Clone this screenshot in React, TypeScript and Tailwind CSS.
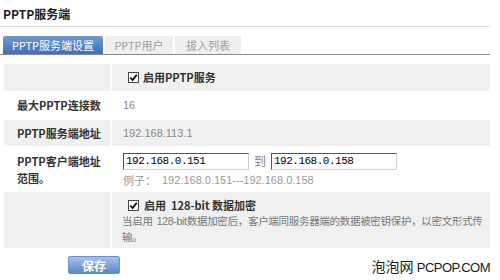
const cjk = "font-['Noto_Sans_CJK_SC','Noto_Sans',sans-serif]";

function Check() {
  return (
    <span className="inline-flex h-[11px] w-[11px] items-center justify-center border border-[#444] bg-white">
      <svg viewBox="0 0 10 10" className="h-[9px] w-[9px]">
        <path d="M1.5 5 L4 7.8 L8.7 1.8" fill="none" stroke="#111" strokeWidth="2" />
      </svg>
    </span>
  );
}

function IpInput({ value }: { value: string }) {
  return (
    <div className="flex h-[17px] w-[126px] items-center border border-t-[#555] border-l-[#555] border-r-[#d0d0d0] border-b-[#d0d0d0] bg-white pl-[2px] font-['Liberation_Mono',monospace] text-[11px] tracking-[-0.5px] text-black">
      {value}
    </div>
  );
}

export default function App() {
  return (
    <div className={`${cjk} relative h-[280px] w-[500px] overflow-hidden bg-white text-[11px] text-[#333]`}>
      {/* title */}
      <div className="mr-[10px] border-b border-[#dcdcdc] pl-[3px] pt-[6px] pb-[4px] text-[12px] font-bold leading-[16px] text-[#222]">
        PPTP服务端
      </div>

      {/* tabs */}
      <div className="mr-[10px] mt-[9px] flex gap-[2px] border-b border-[#8a8a8a] pl-[3px]">
        <div className="flex h-[18px] w-[100px] items-center justify-center rounded-t-[2px] bg-gradient-to-b from-[#6f9ad4] to-[#3f6fb5] text-white">
          PPTP服务端设置
        </div>
        <div className="flex h-[18px] w-[68px] items-center justify-center bg-[#efefef] text-[#a0a0a0]">
          PPTP用户
        </div>
        <div className="flex h-[18px] w-[66px] items-center justify-center bg-[#efefef] text-[#a0a0a0]">
          拔入列表
        </div>
      </div>

      {/* form table */}
      <div className="ml-[4px] mt-[9px] grid w-[486px] grid-cols-[106px_378px] gap-x-[2px] gap-y-[1px]">
        <div className="h-[27px] bg-[#f0f0f0]" />
        <div className="flex h-[27px] items-center gap-[4px] bg-[#f0f0f0] pl-[16px] font-bold">
          <Check />
          <span>启用PPTP服务</span>
        </div>

        <div className="flex h-[27px] items-center pl-[13px] font-bold">最大PPTP连接数</div>
        <div className="flex h-[27px] items-center pl-[11px] font-['Liberation_Sans',sans-serif] text-[#888]">
          16
        </div>

        <div className="flex h-[26px] items-center bg-[#f0f0f0] pl-[13px] font-bold">PPTP服务端地址</div>
        <div className="flex h-[26px] items-center bg-[#f0f0f0] pl-[11px] font-['Liberation_Sans',sans-serif] text-[#888]">
          192.168.113.1
        </div>

        <div className="h-[44px] pl-[13px] pt-[6px] font-bold leading-[17px]">
          PPTP客户端地址
          <br />
          范围。
        </div>
        <div className="h-[44px] pl-[11px] pt-[5px]">
          <div className="flex items-center gap-[5px]">
            <IpInput value="192.168.0.151" />
            <span className="text-[12px] text-[#888]">到</span>
            <IpInput value="192.168.0.158" />
          </div>
          <div className="mt-[2px] flex gap-[6px] text-[#999]">
            <span>例子：</span>
            <span className="font-['Liberation_Sans',sans-serif]">192.168.0.151---192.168.0.158</span>
          </div>
        </div>

        <div className="h-[56px] bg-[#f0f0f0]" />
        <div className="h-[56px] bg-[#f0f0f0] pl-[10px] pt-[5px] leading-[16px]">
          <div className="flex items-center gap-[5px] pl-[6px] font-bold">
            <Check />
            <span>启用&nbsp;&nbsp;128-bit 数据加密</span>
          </div>
          <div className="whitespace-nowrap text-[10.5px] tracking-[-0.3px] text-[#777]">
            当启用&nbsp;&nbsp;<span className="font-['Liberation_Sans',sans-serif]">128-bit</span>
            数据加密后，客户端同服务器端的数据被密钥保护，以密文形式传
            <br />
            输。
          </div>
        </div>
      </div>

      {/* footer */}
      <div className="mr-[10px] mt-[4px] flex items-center justify-between pl-[68px]">
        <button className="h-[18px] w-[52px] rounded-[2px] border border-[#6b8fc9] bg-gradient-to-b from-[#a9c3ea] to-[#5a86c8] text-[12px] font-bold text-white">
          保存
        </button>
        <span className="pt-[4px] text-[14px] text-[#1a1a1a]">
          泡泡网 <span className="font-['Liberation_Sans',sans-serif] text-[13px] tracking-[-0.5px]">PCPOP.COM</span>
        </span>
      </div>
    </div>
  );
}
